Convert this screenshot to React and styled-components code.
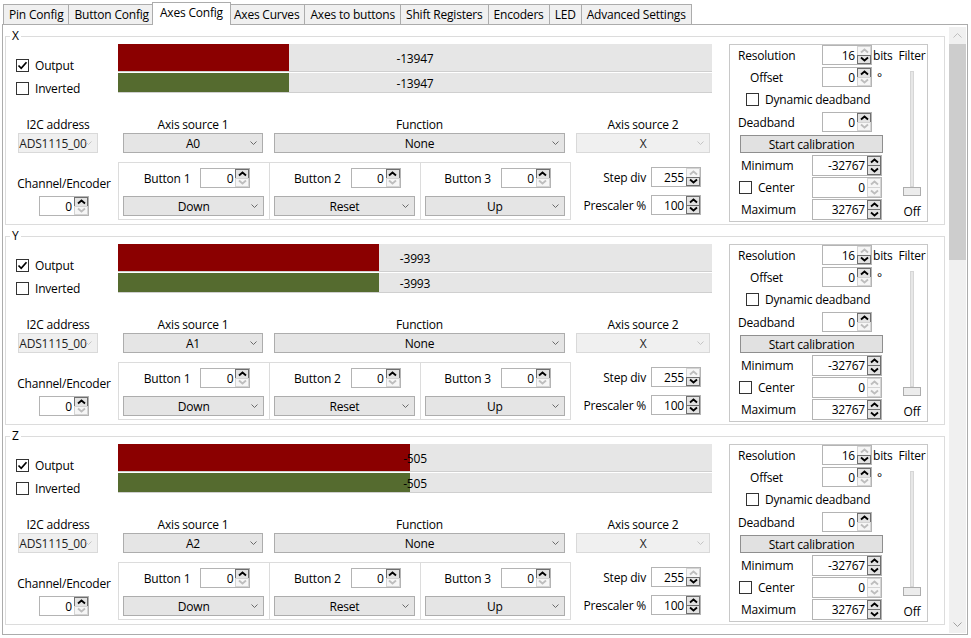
import React from "react";
import styled, { createGlobalStyle } from "styled-components";

const GlobalStyle = createGlobalStyle`
  html, body { margin: 0; padding: 0; background: #fff; }
  body {
    font-family: "Open Sans", "Noto Sans", sans-serif;
    font-size: 12px;
    letter-spacing: -0.2px;
    color: #000;
  }
  * { box-sizing: border-box; }
`;

const TABS = [
  "Pin Config",
  "Button Config",
  "Axes Config",
  "Axes Curves",
  "Axes to buttons",
  "Shift Registers",
  "Encoders",
  "LED",
  "Advanced Settings",
];

// only the axes that are scrolled into view
const AXES = [
  { name: "X", value: -13947, source: "A0" },
  { name: "Y", value: -3993, source: "A1" },
  { name: "Z", value: -505, source: "A2" },
];

const Window = styled.div`
  width: 971px;
  height: 638px;
  padding: 2px 3px 0 2px;
  overflow: hidden;
`;

const TabStrip = styled.div`
  display: flex;
  align-items: flex-end;
  height: 22px;
  padding-left: 1px;
`;

const Tab = styled.div`
  position: relative;
  z-index: ${(p) => (p.$active ? 1 : 0)};
  height: ${(p) => (p.$active ? 23 : 20)}px;
  margin: 0 ${(p) => (p.$active ? -2 : 0)}px
    ${(p) => (p.$active ? -1 : 0)}px ${(p) => (p.$active ? -3 : -1)}px;
  padding: 0 ${(p) => (p.$active ? 7 : 5)}px;
  display: flex;
  align-items: center;
  padding-bottom: ${(p) => (p.$active ? 3 : 0)}px;
  border: 1px solid #acacac;
  border-bottom: none;
  background: ${(p) => (p.$active ? "#fff" : "#f0f0f0")};
  white-space: nowrap;
  &:first-child { margin-left: 0; }
`;

const Panel = styled.div`
  height: 611px;
  border: 1px solid #acacac;
  display: flex;
`;

const ScrollArea = styled.div`
  flex: 1;
  overflow: hidden;
  padding: 4px 4px 0 2px;
`;

const ScrollBar = styled.div`
  width: 17px;
  margin: 2px 1px 1px 0;
  background: #f0f0f0;
  display: flex;
  flex-direction: column;
`;

const ScrollArrow = styled.div`
  height: 17px;
  display: flex;
  align-items: center;
  justify-content: center;
`;

const ScrollTrack = styled.div`
  flex: 1;
`;

const ScrollThumb = styled.div`
  height: 216px;
  background: #cdcdcd;
`;

const Group = styled.fieldset`
  margin: 0 0 4px;
  padding: 1px 15px 0 0;
  height: 196px;
  min-width: 0;
  border: 1px solid #dcdcdc;
  display: flex;
  gap: 17px;
`;

const Legend = styled.legend`
  margin-left: 4px;
  padding: 0 2px;
  line-height: 14px;
  font-size: 12px;
`;

const LeftArea = styled.div`
  width: 706px;
  display: flex;
  flex-direction: column;
`;

const TopRow = styled.div`
  display: flex;
`;

const CheckCol = styled.div`
  width: 112px;
  padding: 15px 0 0 10px;
  display: flex;
  flex-direction: column;
  gap: 10px;
`;

const CheckRow = styled.label`
  display: flex;
  align-items: center;
  gap: 6px;
  height: 13px;
  white-space: nowrap;
`;

const Box = styled.span`
  width: 13px;
  height: 13px;
  flex: none;
  border: 1px solid #333;
  background: #fff;
  display: flex;
  align-items: center;
  justify-content: center;
`;

const Bars = styled.div`
  width: 594px;
  display: flex;
  flex-direction: column;
  gap: 1px;
`;

const Bar = styled.div`
  height: ${(p) => p.$h}px;
  background: #e6e6e6;
  border-bottom: 1px solid #cfcfcf;
  display: grid;
`;

const BarFill = styled.div`
  grid-area: 1 / 1;
  background: ${(p) => p.$color};
`;

const BarText = styled.div`
  grid-area: 1 / 1;
  align-self: center;
  justify-self: center;
  margin-top: 2px;
`;

const SourceRow = styled.div`
  display: flex;
  margin-top: 22px;
  padding-left: 12px;
`;

const Field = styled.div`
  width: ${(p) => p.$w}px;
  margin-left: ${(p) => p.$ml || 0}px;
  display: flex;
  flex-direction: column;
  align-items: center;
`;

const FieldLabel = styled.div`
  line-height: 16px;
  white-space: nowrap;
`;

const ComboBox = styled.div`
  width: 100%;
  height: 20px;
  display: grid;
  align-items: center;
  border: 1px solid ${(p) => (p.$off ? "#d9d9d9" : "#adadad")};
  background: ${(p) => (p.$off ? "#f0f0f0" : "#e5e5e5")};
  color: ${(p) => (p.$off ? "#1e1e1e" : "#000")};
`;

const ComboValue = styled.span`
  grid-area: 1 / 1;
  justify-self: center;
  margin-right: ${(p) => (p.$shift ? 10 : 0)}px;
`;

const ComboArrow = styled.svg`
  grid-area: 1 / 1;
  justify-self: end;
  margin-right: 5px;
`;

const BottomRow = styled.div`
  display: flex;
  margin-top: 9px;
  height: 58px;
`;

const ChannelCol = styled.div`
  width: 112px;
  display: flex;
  flex-direction: column;
  align-items: center;
  justify-content: flex-end;
  padding: 0 0 4px 4px;
  gap: 4px;
`;

const ButtonBox = styled.div`
  width: 453px;
  border: 1px solid #dcdcdc;
  display: grid;
  grid-template-columns: repeat(3, 1fr);
`;

const ButtonCell = styled.div`
  padding: 5px 5px 3px 4px;
  display: flex;
  flex-direction: column;
  gap: 8px;
  & + & { border-left: 1px solid #dcdcdc; }
`;

const ButtonHead = styled.div`
  height: 20px;
  display: flex;
  align-items: center;
  justify-content: flex-end;
  gap: 10px;
  padding-right: 14px;
`;

const StepCol = styled.div`
  width: 141px;
  padding: 5px 11px 0 0;
  display: flex;
  flex-direction: column;
  align-items: flex-end;
  gap: 8px;
`;

const StepRow = styled.div`
  display: flex;
  align-items: center;
  gap: 5px;
`;

const CalBox = styled.div`
  width: 199px;
  height: 178px;
  border: 1px solid #c8c8c8;
  display: flex;
`;

const CalControls = styled.div`
  flex: 1;
  display: flex;
  flex-direction: column;
`;

const CalRow = styled.div`
  display: flex;
  align-items: center;
  height: ${(p) => p.$h || 20}px;
  margin-bottom: ${(p) => p.$mb || 0}px;
  padding-left: ${(p) => p.$pl || 0}px;
  white-space: nowrap;
`;

const CalLabel = styled.span`
  width: ${(p) => p.$w}px;
  flex: none;
`;

const Suffix = styled.span`
  margin-left: ${(p) => p.$ml || 1}px;
`;

const CalButton = styled.div`
  width: 143px;
  height: 18px;
  margin: 3px 0 2px 10px;
  border: 1px solid #8f8f8f;
  background: #e1e1e1;
  display: flex;
  align-items: center;
  justify-content: center;
`;

const RangeList = styled.div`
  display: flex;
  flex-direction: column;
  gap: 1px;
`;

const FilterCol = styled.div`
  width: 30px;
  display: flex;
  flex-direction: column;
  align-items: center;
`;

const FilterLabel = styled.div`
  line-height: 16px;
  margin-top: ${(p) => p.$mt}px;
`;

const SliderTrack = styled.div`
  width: 4px;
  height: 116px;
  margin-top: 7px;
  background: #e7e7e7;
  border: 1px solid #d6d6d6;
`;

const SliderThumb = styled.div`
  width: 18px;
  height: 9px;
  background: #ececec;
  border: 1px solid #acacac;
`;

const SpinWrap = styled.div`
  width: ${(p) => p.$w}px;
  height: ${(p) => p.$h || 20}px;
  flex: none;
  display: flex;
  border: 1px solid #b4b4b4;
  background: #fff;
`;

const SpinText = styled.span`
  flex: 1;
  display: flex;
  align-items: center;
  justify-content: flex-end;
  padding-right: 2px;
`;

const SpinBtns = styled.div`
  width: 14px;
  display: flex;
  flex-direction: column;
`;

const SpinBtn = styled.span`
  flex: 1;
  display: flex;
  align-items: center;
  justify-content: center;
  border: 1px solid ${(p) => (p.$off ? "#d4d4d4" : "#6f6f6f")};
  background: ${(p) => (p.$off ? "#f6f6f6" : "#e3e3e3")};
  & + & { margin-top: -1px; }
`;

function Caret({ down, off }) {
  return (
    <svg width="9" height="6" viewBox="0 0 9 6">
      <path
        d={down ? "M1 1.5 L4.5 4.5 L8 1.5" : "M1 4.5 L4.5 1.5 L8 4.5"}
        fill="none"
        stroke={off ? "#bdbdbd" : "#000"}
        strokeWidth="1.8"
      />
    </svg>
  );
}

function Spinner({ value, w = 50, h = 20, upOff, downOff }) {
  return (
    <SpinWrap $w={w} $h={h}>
      <SpinText>{value}</SpinText>
      <SpinBtns>
        <SpinBtn $off={upOff}>
          <Caret off={upOff} />
        </SpinBtn>
        <SpinBtn $off={downOff}>
          <Caret down off={downOff} />
        </SpinBtn>
      </SpinBtns>
    </SpinWrap>
  );
}

function Combo({ value, off, shift }) {
  return (
    <ComboBox $off={off}>
      <ComboValue $shift={shift}>{value}</ComboValue>
      <ComboArrow width="7" height="4" viewBox="0 0 7 4">
        <path
          d="M0.5 0.5 L3.5 3.5 L6.5 0.5"
          fill="none"
          stroke={off ? "#c4c4c4" : "#6a6a6a"}
          strokeWidth="1"
        />
      </ComboArrow>
    </ComboBox>
  );
}

function CheckBox({ checked, children }) {
  return (
    <CheckRow>
      <Box>
        {checked && (
          <svg width="11" height="11" viewBox="0 0 11 11">
            <path
              d="M1.5 5.5 L4.2 8.3 L9.5 2.2"
              fill="none"
              stroke="#000"
              strokeWidth="1.7"
            />
          </svg>
        )}
      </Box>
      {children}
    </CheckRow>
  );
}

function AxisGroup({ axis }) {
  const pct = ((axis.value + 32767) / 65534) * 100;
  return (
    <Group>
      <Legend>{axis.name}</Legend>
      <LeftArea>
        <TopRow>
          <CheckCol>
            <CheckBox checked>Output</CheckBox>
            <CheckBox>Inverted</CheckBox>
          </CheckCol>
          <Bars>
            <Bar $h={28}>
              <BarFill $color="#8b0000" style={{ width: `${pct}%` }} />
              <BarText>{axis.value}</BarText>
            </Bar>
            <Bar $h={20}>
              <BarFill $color="#556b2f" style={{ width: `${pct}%` }} />
              <BarText>{axis.value}</BarText>
            </Bar>
          </Bars>
        </TopRow>

        <SourceRow>
          <Field $w={80}>
            <FieldLabel>I2C address</FieldLabel>
            <Combo value="ADS1115_00" off shift />
          </Field>
          <Field $w={140} $ml={25}>
            <FieldLabel>Axis source 1</FieldLabel>
            <Combo value={axis.source} />
          </Field>
          <Field $w={291} $ml={11}>
            <FieldLabel>Function</FieldLabel>
            <Combo value="None" />
          </Field>
          <Field $w={134} $ml={11}>
            <FieldLabel>Axis source 2</FieldLabel>
            <Combo value="X" off />
          </Field>
        </SourceRow>

        <BottomRow>
          <ChannelCol>
            <FieldLabel>Channel/Encoder</FieldLabel>
            <Spinner value={0} downOff />
          </ChannelCol>
          <ButtonBox>
            {["Down", "Reset", "Up"].map((mode, i) => (
              <ButtonCell key={mode}>
                <ButtonHead>
                  <span>Button {i + 1}</span>
                  <Spinner value={0} downOff />
                </ButtonHead>
                <Combo value={mode} />
              </ButtonCell>
            ))}
          </ButtonBox>
          <StepCol>
            <StepRow>
              <span>Step div</span>
              <Spinner value={255} upOff />
            </StepRow>
            <StepRow>
              <span>Prescaler %</span>
              <Spinner value={100} />
            </StepRow>
          </StepCol>
        </BottomRow>
      </LeftArea>

      <CalBox>
        <CalControls>
          <CalRow $pl={8} $mb={2}>
            <CalLabel $w={84}>Resolution</CalLabel>
            <Spinner value={16} upOff />
            <Suffix>bits</Suffix>
          </CalRow>
          <CalRow $pl={20}>
            <CalLabel $w={72}>Offset</CalLabel>
            <Spinner value={0} downOff />
            <Suffix $ml={5}>°</Suffix>
          </CalRow>
          <CalRow $pl={16} $h={25}>
            <CheckBox>Dynamic deadband</CheckBox>
          </CalRow>
          <CalRow $pl={8}>
            <CalLabel $w={84}>Deadband</CalLabel>
            <Spinner value={0} downOff />
          </CalRow>
          <CalButton>Start calibration</CalButton>
          <RangeList>
            <CalRow $pl={11} $h={21}>
              <CalLabel $w={71}>Minimum</CalLabel>
              <Spinner value={-32767} w={70} h={21} />
            </CalRow>
            <CalRow $pl={9} $h={21}>
              <CalLabel $w={73}>
                <CheckBox>Center</CheckBox>
              </CalLabel>
              <Spinner value={0} w={70} h={21} upOff downOff />
            </CalRow>
            <CalRow $pl={11} $h={21}>
              <CalLabel $w={71}>Maximum</CalLabel>
              <Spinner value={32767} w={70} h={21} />
            </CalRow>
          </RangeList>
        </CalControls>
        <FilterCol>
          <FilterLabel $mt={3}>Filter</FilterLabel>
          <SliderTrack />
          <SliderThumb />
          <FilterLabel $mt={8}>Off</FilterLabel>
        </FilterCol>
      </CalBox>
    </Group>
  );
}

function ScrollChevron({ down, off }) {
  return (
    <svg width="9" height="5" viewBox="0 0 9 5">
      <path
        d={down ? "M0.5 0.5 L4.5 4.5 L8.5 0.5" : "M0.5 4.5 L4.5 0.5 L8.5 4.5"}
        fill="none"
        stroke={off ? "#bfbfbf" : "#a0a0a0"}
        strokeWidth="1"
      />
    </svg>
  );
}

export default function App() {
  return (
    <>
      <GlobalStyle />
      <Window>
        <TabStrip>
          {TABS.map((t) => (
            <Tab key={t} $active={t === "Axes Config"}>
              {t}
            </Tab>
          ))}
        </TabStrip>
        <Panel>
          <ScrollArea>
            {AXES.map((a) => (
              <AxisGroup key={a.name} axis={a} />
            ))}
          </ScrollArea>
          <ScrollBar>
            <ScrollArrow>
              <ScrollChevron off />
            </ScrollArrow>
            <ScrollTrack>
              <ScrollThumb />
            </ScrollTrack>
            <ScrollArrow>
              <ScrollChevron down />
            </ScrollArrow>
          </ScrollBar>
        </Panel>
      </Window>
    </>
  );
}
